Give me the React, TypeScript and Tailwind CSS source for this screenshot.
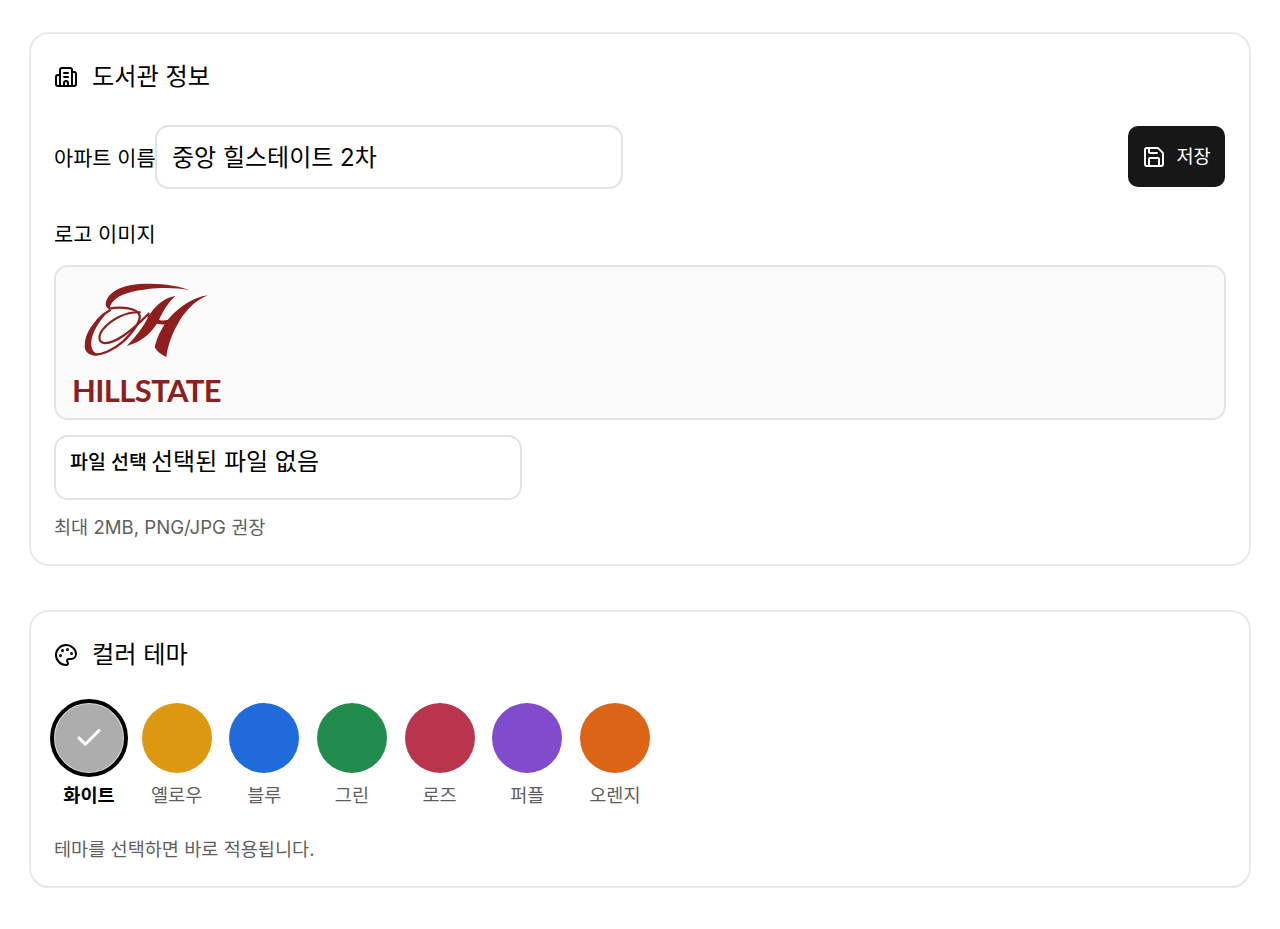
import React from "react";
import { Building2, Check, Palette, Save } from "lucide-react";

type Theme = {
  name: string;
  swatch: string;
  active?: boolean;
};

const themes: Theme[] = [
  { name: "화이트", swatch: "bg-[#adadad]", active: true },
  { name: "옐로우", swatch: "bg-[#dc980e]" },
  { name: "블루", swatch: "bg-[#1f6bdb]" },
  { name: "그린", swatch: "bg-[#218c4b]" },
  { name: "로즈", swatch: "bg-[#b9344d]" },
  { name: "퍼플", swatch: "bg-[#804ccd]" },
  { name: "오렌지", swatch: "bg-[#dc6416]" },
];

const HillstateLogo = () => (
  <div className="flex flex-col items-start">
    {/* traced at 3x, viewBox is the 3x crop */}
    <svg width="135" height="85" viewBox="0 0 405 255" fill="none" className="ml-[9px]">
      <path d="M330 37C290 22 220 11 150 22C105 30 78 55 77 78C77 86 82 92 90 95C88 84 94 74 108 62C130 45 175 35 230 31C265 29 300 31 330 37Z" fill="#8f1f1f" />
      <path d="M88 92C125 85 172 90 179 112C182 130 160 160 130 190C100 216 65 232 40 229C22 224 18 200 28 170C38 140 60 112 92 95" stroke="#8f1f1f" strokeWidth="7" />
      <path d="M14 205C14 165 40 128 82 103C58 130 38 160 34 190C32 210 38 224 56 230C32 236 15 226 14 205Z" fill="#8f1f1f" />
      <path d="M182 103C140 100 95 122 68 155C54 174 55 193 72 195C100 198 150 165 208 105" stroke="#8f1f1f" strokeWidth="6.5" />
      <path d="M286 54C250 60 224 84 204 118C190 146 172 172 140 204C190 190 218 160 236 128C248 100 266 72 286 54Z" fill="#8f1f1f" />
      <path d="M383 52C340 58 300 84 266 122C244 150 230 180 224 208C232 222 246 232 259 237C263 205 276 165 300 126C322 92 350 66 383 52Z" fill="#8f1f1f" />
      <path d="M206 108C222 126 246 132 272 124L266 137C240 144 218 136 202 118Z" fill="#8f1f1f" />
    </svg>
    <span className="mt-[8px] ml-[1px] text-[31px] leading-[38px] font-bold tracking-[-0.02em] text-[#8c1f1f] font-['Lato',sans-serif]">HILLSTATE</span>
  </div>
);

const App = () => {
  return (
    <div className="min-h-[929px] bg-white px-[29px] pt-[32px] text-black font-['Inter','Noto_Sans_CJK_KR',sans-serif]">
      {/* 도서관 정보 */}
      <section className="h-[534px] rounded-[20px] border-2 border-[#e8e8e8] px-[23px] pt-[25px]">
        <div className="flex h-[36px] items-center gap-[14px]">
          <Building2 size={24} strokeWidth={2} />
          <h2 className="text-[24.2px] leading-[36px]">도서관 정보</h2>
        </div>

        <div className="mt-[30px] flex items-center">
          <label className="mt-[3px] w-[101px] shrink-0 text-[20.8px] leading-[30px] whitespace-nowrap">아파트 이름</label>
          <input
            readOnly
            value="중앙 힐스테이트 2차"
            className="h-[64px] w-[468px] rounded-[14px] border-2 border-[#e2e2e2] px-[15px] pb-[3px] text-[24px] outline-none"
          />
          <button className="mr-[1px] mb-[1px] ml-auto flex h-[61px] w-[97px] items-center justify-center gap-[10px] rounded-[10px] bg-[#171717] pt-[1px] text-[18.6px] text-white">
            <Save size={24} strokeWidth={2} />
            저장
          </button>
        </div>

        <p className="mt-[31px] text-[20.8px] leading-[30px]">로고 이미지</p>

        <div className="mt-[15px] h-[155px] rounded-[14px] border-2 border-[#e4e4e4] bg-[#fbfbfb] pt-[11px] pl-[15px]">
          <HillstateLogo />
        </div>

        <div className="mt-[15px] flex h-[65px] w-[468px] items-start rounded-[14px] border-2 border-[#e4e4e4] px-[14px] pt-[8px]">
          <span className="mr-[4px] text-[19.5px] leading-[34px] font-medium">파일 선택</span>
          <span className="text-[24px] leading-[34px]">선택된 파일 없음</span>
        </div>

        <p className="mt-[13px] text-[18.6px] leading-[28px] text-[#5f5f5f]">최대 2MB, PNG/JPG 권장</p>
      </section>

      {/* 컬러 테마 */}
      <section className="mt-[44px] h-[278px] rounded-[20px] border-2 border-[#e8e8e8] px-[23px] pt-[25px]">
        <div className="flex h-[36px] items-center gap-[14px]">
          <Palette size={24} strokeWidth={2} />
          <h2 className="text-[24.2px] leading-[36px]">컬러 테마</h2>
        </div>

        <div className="mt-[30px] flex gap-[17.67px]">
          {themes.map((theme) => (
            <div key={theme.name} className="flex w-[70px] flex-col items-center">
              <div
                className={`flex h-[70px] w-[70px] items-center justify-center rounded-full ${theme.swatch} ${
                  theme.active ? "outline-[4px] outline-offset-0 outline-black border border-white/50" : ""
                }`}
              >
                {theme.active && <Check size={30} strokeWidth={2.5} className="text-white" />}
              </div>
              <span
                className={`mt-[8px] text-[18.6px] leading-[28px] ${
                  theme.active ? "font-bold text-black" : "text-[#5f5f5f]"
                }`}
              >
                {theme.name}
              </span>
            </div>
          ))}
        </div>

        <p className="mt-[26px] text-[18.6px] leading-[28px] text-[#5f5f5f]">테마를 선택하면 바로 적용됩니다.</p>
      </section>
    </div>
  );
};

export default App;
